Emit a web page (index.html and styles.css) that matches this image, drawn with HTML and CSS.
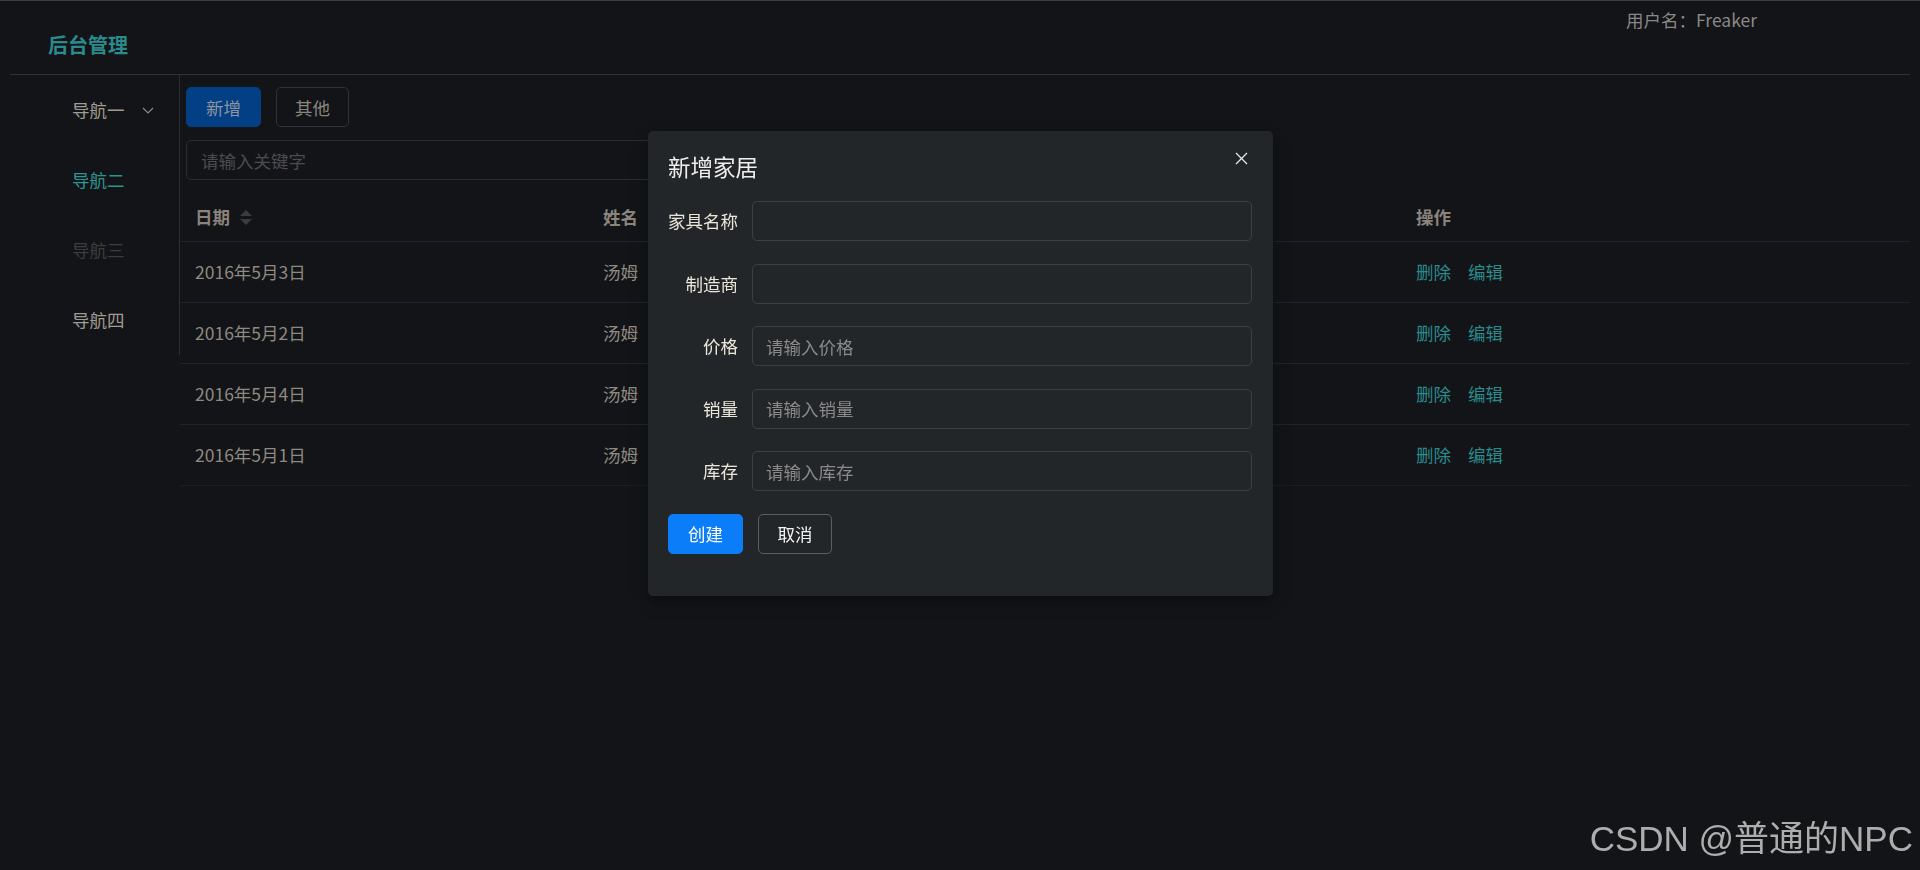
FILE: index.html
```html
<!DOCTYPE html>
<html lang="zh-CN">
<head>
  <meta charset="UTF-8">
  <meta name="viewport" content="width=device-width, initial-scale=1.0">
  <title>后台管理</title>
  <link rel="stylesheet" href="styles.css">
</head>
<body>
  <div class="topline"></div>
  <div class="layout">
    <header class="header">
      <div class="brand">后台管理</div>
      <div class="user">用户名：Freaker</div>
    </header>
    <div class="content">
      <aside class="aside">
        <ul class="menu">
          <li class="menu-item submenu">
            <span>导航一</span>
            <svg class="arrow" width="14" height="14" viewBox="0 0 14 14"><polyline points="2,5 7,10 12,5" fill="none" stroke="#8a8a8a" stroke-width="1.1"/></svg>
          </li>
          <li class="menu-item active">导航二</li>
          <li class="menu-item disabled">导航三</li>
          <li class="menu-item">导航四</li>
        </ul>
      </aside>
      <main class="main">
        <div class="toolbar">
          <button class="btn btn-dim">新增</button>
          <button class="btn btn-plain">其他</button>
        </div>
        <div class="search">
          <input type="text" placeholder="请输入关键字">
        </div>
        <table class="table">
          <colgroup>
            <col style="width:408px">
            <col style="width:813px">
            <col>
          </colgroup>
          <thead>
            <tr>
              <th>日期
                <span class="sort">
                  <i class="caret up"></i>
                  <i class="caret down"></i>
                </span>
              </th>
              <th>姓名</th>
              <th>操作</th>
            </tr>
          </thead>
          <tbody>
            <tr><td>2016年5月3日</td><td>汤姆</td><td><a class="link">删除</a><a class="link">编辑</a></td></tr>
            <tr><td>2016年5月2日</td><td>汤姆</td><td><a class="link">删除</a><a class="link">编辑</a></td></tr>
            <tr><td>2016年5月4日</td><td>汤姆</td><td><a class="link">删除</a><a class="link">编辑</a></td></tr>
            <tr class="last"><td>2016年5月1日</td><td>汤姆</td><td><a class="link">删除</a><a class="link">编辑</a></td></tr>
          </tbody>
        </table>
      </main>
    </div>
  </div>

  <div class="dialog">
    <div class="dialog-header">
      <span class="dialog-title">新增家居</span>
      <svg class="dialog-close" width="13" height="13" viewBox="0 0 13 13"><path d="M1 1 L12 12 M12 1 L1 12" stroke="#e6e6e6" stroke-width="1.3" fill="none"/></svg>
    </div>
    <form class="form">
      <div class="form-item">
        <label class="form-label">家具名称</label>
        <input class="form-input" type="text">
      </div>
      <div class="form-item">
        <label class="form-label">制造商</label>
        <input class="form-input" type="text">
      </div>
      <div class="form-item">
        <label class="form-label">价格</label>
        <input class="form-input" type="text" placeholder="请输入价格">
      </div>
      <div class="form-item">
        <label class="form-label">销量</label>
        <input class="form-input" type="text" placeholder="请输入销量">
      </div>
      <div class="form-item">
        <label class="form-label">库存</label>
        <input class="form-input" type="text" placeholder="请输入库存">
      </div>
      <div class="form-item form-actions">
        <button type="button" class="btn btn-primary">创建</button>
        <button type="button" class="btn btn-cancel">取消</button>
      </div>
    </form>
  </div>

  <div class="watermark">CSDN @普通的NPC</div>
</body>
</html>
```

FILE: styles.css
```css
* {
    box-sizing: border-box;
}
body {
    margin: 0;
    background: #131417;
    font-family: "Noto Sans CJK SC", "Noto Sans", sans-serif;
    font-size: 17.5px;
    color: #8e8981;
}
.topline {
    height: 1px;
    background: #3a3b3e;
}
.layout {
    padding: 0 10px;
}

/* header */
.header {
    height: 74px;
    border-bottom: 1px solid #323336;
    display: flex;
    justify-content: space-between;
    align-items: flex-start;
}
.brand {
    margin-top: 30px;
    padding-left: 38px;
    font-size: 20px;
    line-height: 28px;
    font-weight: 700;
    color: #2a8a8c;
}
.user {
    margin-top: 7px;
    padding-right: 153px;
    line-height: 24px;
    color: #8a8886;
}

.content {
    display: flex;
    align-items: flex-start;
}

/* side menu */
.aside {
    width: 170px;
    border-right: 1px solid #2c2e32;
}
.menu {
    list-style: none;
    margin: 0;
    padding: 0;
}
.menu-item {
    height: 70px;
    line-height: 70px;
    padding-left: 62px;
    color: #a09b93;
    display: flex;
    align-items: center;
}
.menu-item .arrow {
    margin-left: 16px;
}
.menu-item.active {
    color: #2d9494;
}
.menu-item.disabled {
    color: #3b3c3e;
}

/* main */
.main {
    flex: 1;
}
.toolbar {
    margin-top: 12px;
    padding-left: 6px;
    display: flex;
    gap: 15px;
}
.btn {
    height: 40px;
    width: 75px;
    border-radius: 5px;
    font-family: inherit;
    font-size: 17.5px;
    padding: 0;
    cursor: pointer;
}
.btn-dim {
    background: #033f84;
    border: 1px solid #033f84;
    color: #8f949c;
}
.btn-plain {
    width: 73px;
    background: transparent;
    border: 1px solid #303136;
    color: #8a857d;
}
.search {
    margin-top: 13px;
    margin-left: 6px;
}
.search input {
    width: 820px;
    height: 40px;
    background: transparent;
    border: 1px solid #2a2c30;
    border-radius: 5px;
    padding: 0 14px;
    font-family: inherit;
    font-size: 17.5px;
    color: #8e8981;
    outline: none;
}
.search input::placeholder {
    color: #4c4c4e;
}

/* table */
.table {
    margin-top: 13px;
    width: 100%;
    border-collapse: collapse;
    table-layout: fixed;
}
.table th {
    height: 48px;
    padding: 0 15px;
    text-align: left;
    font-weight: 700;
    color: #8a847c;
    border-bottom: 1px solid #1e2331;
    line-height: 28px;
}
.table td {
    height: 61px;
    padding: 0 15px;
    border-bottom: 1px solid #1e2331;
    line-height: 28px;
}
.table tr.last td {
    border-bottom-color: #1c1d22;
}
.sort {
    display: inline-flex;
    flex-direction: column;
    vertical-align: middle;
    margin-left: 6px;
    gap: 3px;
    position: relative;
    top: -2px;
}
.caret {
    width: 0;
    height: 0;
    border-left: 6px solid transparent;
    border-right: 6px solid transparent;
}
.caret.up {
    border-bottom: 6px solid #3a3b40;
}
.caret.down {
    border-top: 6px solid #3a3b40;
}
.link {
    color: #2a8a8c;
    margin-right: 17px;
    cursor: pointer;
}

/* dialog */
.dialog {
    position: fixed;
    left: 648px;
    top: 131px;
    width: 625px;
    padding: 20px;
    background: #232629;
    border-radius: 5px;
    box-shadow: 0 6px 16px rgba(0, 0, 0, 0.35);
}
.dialog-header {
    height: 30px;
    position: relative;
}
.dialog-title {
    font-size: 22.5px;
    line-height: 30px;
    color: #efefef;
}
.dialog-close {
    position: absolute;
    right: 5px;
    top: 1px;
}
.form {
    margin-top: 20px;
}
.form-item {
    display: flex;
    margin-bottom: 22.5px;
}
.form-label {
    width: 85px;
    padding-right: 14px;
    margin-left: -1px;
    text-align: right;
    line-height: 40px;
    color: #ebe6da;
}
.form-input {
    width: 500px;
    height: 40px;
    background: transparent;
    border: 1px solid #3c3f45;
    border-radius: 5px;
    padding: 0 13px;
    font-family: inherit;
    font-size: 17.5px;
    color: #e0e0e0;
    outline: none;
}
.form-input::placeholder {
    color: #8a8a8b;
}
.form-actions {
    gap: 15px;
}
.btn-primary {
    background: #0b7df8;
    border: 1px solid #0b7df8;
    color: #ffffff;
}
.btn-cancel {
    width: 74px;
    background: transparent;
    border: 1px solid #5b5e63;
    color: #f2f2f2;
}

.watermark {
    position: fixed;
    right: 7px;
    bottom: 14px;
    font-family: "Liberation Sans", "Noto Sans CJK SC", sans-serif;
    font-size: 35px;
    line-height: 35px;
    color: #adadad;
}
```
